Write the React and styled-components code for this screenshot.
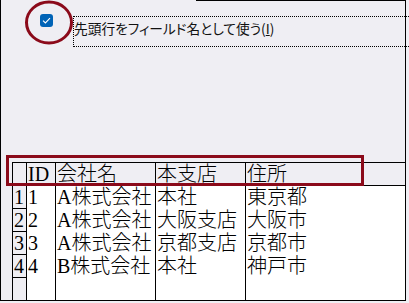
import React from "react";
import styled, { createGlobalStyle } from "styled-components";

const Global = createGlobalStyle`
  html, body {
    margin: 0;
    padding: 0;
    background: #efeef3;
    overflow: hidden;
  }
  #root {
    width: 409px;
    height: 303px;
    overflow: hidden;
  }
`;

const Frame = styled.div`
  position: relative;
  width: 406px;
  height: 301px;
  box-sizing: border-box;
  border-left: 1px solid #000;
  border-right: 1px solid #000;
  border-bottom: 1px solid #000;
  display: flex;
  flex-direction: column;
  &::before {
    content: "";
    position: absolute;
    top: 0;
    left: 195px;
    right: -1px;
    height: 1px;
    background: #000;
  }
`;

const TopPane = styled.div`
  height: 162px;
  flex: none;
  display: flex;
  align-items: flex-start;
  padding-left: 39px;
  box-sizing: border-box;
`;

const CheckBox = styled.span`
  flex: none;
  margin-top: 14px;
  width: 13px;
  height: 13px;
  border-radius: 3px;
  background: #0063b6;
  display: flex;
  align-items: center;
  justify-content: center;
`;

const OptionLabel = styled.div`
  flex: none;
  margin-top: 16px;
  margin-left: 20px;
  width: 360px;
  height: 31px;
  box-sizing: border-box;
  border: 1px dotted #000;
  padding: 3px 0 0 0;
  font-family: "Noto Sans CJK JP", "Noto Sans", sans-serif;
  font-size: 13.7px;
  font-feature-settings: "palt" 1;
  line-height: 16px;
  color: #111;
  white-space: nowrap;
  u {
    text-decoration: underline;
    text-underline-offset: 1px;
  }
`;

const Grid = styled.div`
  flex: 1;
  margin-left: 11px;
  display: grid;
  grid-template-columns: 14px 29px 100px 90px 1fr;
  grid-template-rows: 23px repeat(4, 23px) 1fr;
  border-left: 1px solid #000;
  border-top: 1px solid #000;
  font-family: "Liberation Serif", "Noto Sans CJK JP", serif;
  font-size: 20px;
  line-height: 22px;
  color: #000;
`;

const Cell = styled.div`
  box-sizing: border-box;
  border-right: ${(p) => (p.$last ? "none" : "1px solid #000")};
  border-bottom: ${(p) => (p.$rule ? "1px solid #000" : "none")};
  background: ${(p) => (p.$shade ? "#efeef3" : "#fff")};
  padding-left: 1px;
  white-space: nowrap;
  overflow: hidden;
  font-weight: 300;
`;

const Ellipse = styled.svg`
  position: absolute;
  left: 23px;
  top: 0;
  width: 50px;
  height: 46px;
  overflow: visible;
`;

const Highlight = styled.div`
  position: absolute;
  left: 5px;
  top: 155px;
  width: 358px;
  height: 31px;
  box-sizing: border-box;
  border: 3px solid #8b0a1a;
`;

const headers = ["ID", "会社名", "本支店", "住所"];
const rows = [
  ["1", "A株式会社", "本社", "東京都"],
  ["2", "A株式会社", "大阪支店", "大阪市"],
  ["3", "A株式会社", "京都支店", "京都市"],
  ["4", "B株式会社", "本社", "神戸市"],
];

export default function App() {
  return (
    <>
      <Global />
      <Frame>
        <TopPane>
          <CheckBox>
            <svg width="9" height="7" viewBox="0 0 9 7">
              <path d="M1 3.6 L3.4 6 L8 1.2" fill="none" stroke="#fff" strokeWidth="1.1" />
            </svg>
          </CheckBox>
          <OptionLabel>
            先頭行をフィールド名として使う(<u>I</u>)
          </OptionLabel>
        </TopPane>
        <Grid>
          <Cell $shade $rule />
          {headers.map((h, i) => (
            <Cell key={h} $shade $rule $last={i === headers.length - 1}>
              {h}
            </Cell>
          ))}
          {rows.map((r) => (
            <React.Fragment key={r[0]}>
              <Cell $shade $rule>
                {r[0]}
              </Cell>
              {r.map((v, i) => (
                <Cell key={i} $last={i === r.length - 1}>
                  {v}
                </Cell>
              ))}
            </React.Fragment>
          ))}
          <Cell $shade />
          <Cell />
          <Cell />
          <Cell />
          <Cell $last />
        </Grid>
        <Ellipse viewBox="0 0 50 46">
          <ellipse cx="25" cy="22.5" rx="22.5" ry="20.5" fill="none" stroke="#8b0a1a" strokeWidth="3" />
        </Ellipse>
        <Highlight />
      </Frame>
    </>
  );
}
